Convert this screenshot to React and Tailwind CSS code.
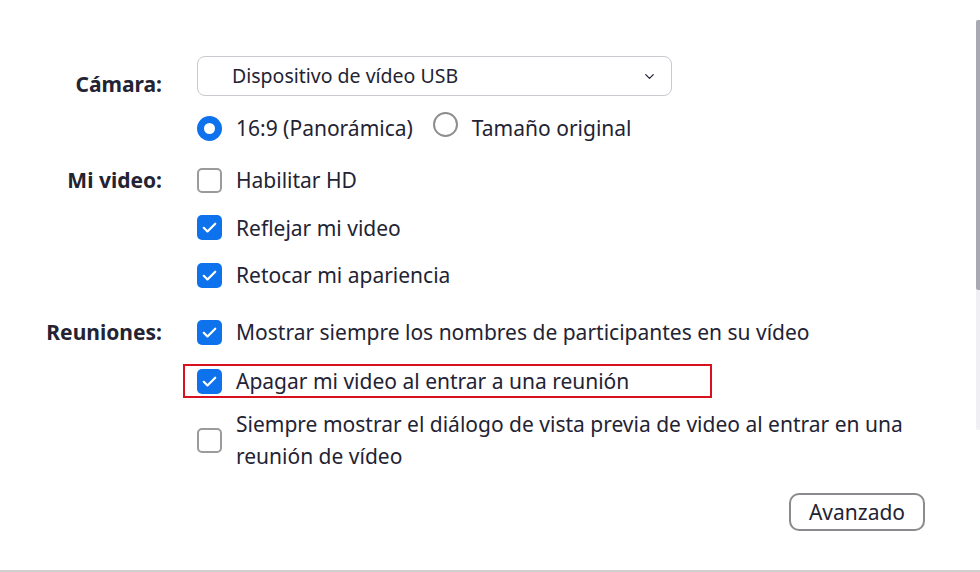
import { ChevronDown } from "lucide-react";

const FONT = { fontFamily: '"Noto Sans", "Open Sans", sans-serif' };

function Check({ checked }) {
  if (!checked) {
    return (
      <span className="inline-block h-[25px] w-[25px] shrink-0 rounded-[5px] border-2 border-[#9b9b9b] bg-white" />
    );
  }
  return (
    <span className="inline-flex h-[25px] w-[25px] shrink-0 items-center justify-center rounded-[5px] bg-[#0e72ed]">
      <svg width="17" height="17" viewBox="0 0 16 16" fill="none">
        <path d="M2.6 8.3l3.5 3.4L13.4 4.4" stroke="white" strokeWidth="2.1" strokeLinecap="round" strokeLinejoin="round" />
      </svg>
    </span>
  );
}

function Radio({ selected }) {
  if (selected) {
    return (
      <span className="inline-flex h-[25px] w-[25px] shrink-0 items-center justify-center rounded-full bg-[#0e72ed]">
        <span className="h-[11px] w-[11px] rounded-full bg-white" />
      </span>
    );
  }
  return <span className="inline-block h-[25px] w-[25px] shrink-0 rounded-full border-2 border-[#8e8e8e] bg-white" />;
}

function Option({ checked, children }) {
  return (
    <div className="flex h-[32px] items-center gap-[14px]">
      <Check checked={checked} />
      <span className="whitespace-nowrap">{children}</span>
    </div>
  );
}

function Label({ children, className = "" }) {
  return (
    <div className={`w-[162px] shrink-0 text-right font-bold leading-[32px] ${className}`}>{children}</div>
  );
}

export default function App() {
  return (
    <div
      style={FONT}
      className="relative flex h-[572px] w-[980px] flex-col overflow-hidden border-b-2 border-[#cfcfcf] bg-white text-[21px] leading-[32px] text-[#232333]"
    >
      {/* Cámara */}
      <div className="mt-[56px] flex gap-[35px]">
        <Label className="pt-[12px]">Cámara:</Label>
        <div className="flex flex-col">
          <div className="flex h-[40px] w-[475px] items-center justify-between rounded-[8px] border border-[#c9c9cf] pl-[34px] pr-[14px] text-[19.5px]">
            <span>Dispositivo de vídeo USB</span>
            <ChevronDown size={15} strokeWidth={2} className="text-[#232333]" />
          </div>
          <div className="mt-[16px] flex h-[32px] items-center">
            <Radio selected />
            <span className="ml-[14px]">16:9 (Panorámica)</span>
            <span className="ml-[20px]">
              <Radio />
            </span>
            <span className="ml-[14px]">Tamaño original</span>
          </div>
        </div>
      </div>

      {/* Mi video */}
      <div className="mt-[20px] flex gap-[35px]">
        <Label>Mi video:</Label>
        <div className="flex flex-col gap-[15.5px]">
          <Option>Habilitar HD</Option>
          <Option checked>Reflejar mi video</Option>
          <Option checked>Retocar mi apariencia</Option>
        </div>
      </div>

      {/* Reuniones */}
      <div className="mt-[25px] flex gap-[35px]">
        <Label>Reuniones:</Label>
        <div className="flex flex-col">
          <Option checked>Mostrar siempre los nombres de participantes en su vídeo</Option>
          <div className="-ml-[14px] mt-[16px] flex h-[34px] w-[529px] items-center gap-[14px] border-2 border-[#d9101e] pl-[12px]">
            <Check checked />
            <span className="whitespace-nowrap">Apagar mi video al entrar a una reunión</span>
          </div>
          <div className="mt-[10px] flex items-center gap-[14px]">
            <Check />
            <span className="w-[690px]">
              Siempre mostrar el diálogo de vista previa de video al entrar en una reunión de vídeo
            </span>
          </div>
        </div>
      </div>

      <div className="mt-[21px] flex justify-end pr-[55px]">
        <button className="h-[38px] w-[136px] rounded-[10px] border-2 border-[#8a8a8f] bg-white text-[21px] leading-none text-[#232333]">
          Avanzado
        </button>
      </div>

      {/* scrollbar */}
      <div className="absolute right-0 top-[20px] h-[410px] w-[4px] rounded-l-[2px] bg-[#f0f0f4]">
        <div className="h-[270px] w-full rounded-l-[2px] bg-[#a9a9b3]" />
      </div>
    </div>
  );
}
